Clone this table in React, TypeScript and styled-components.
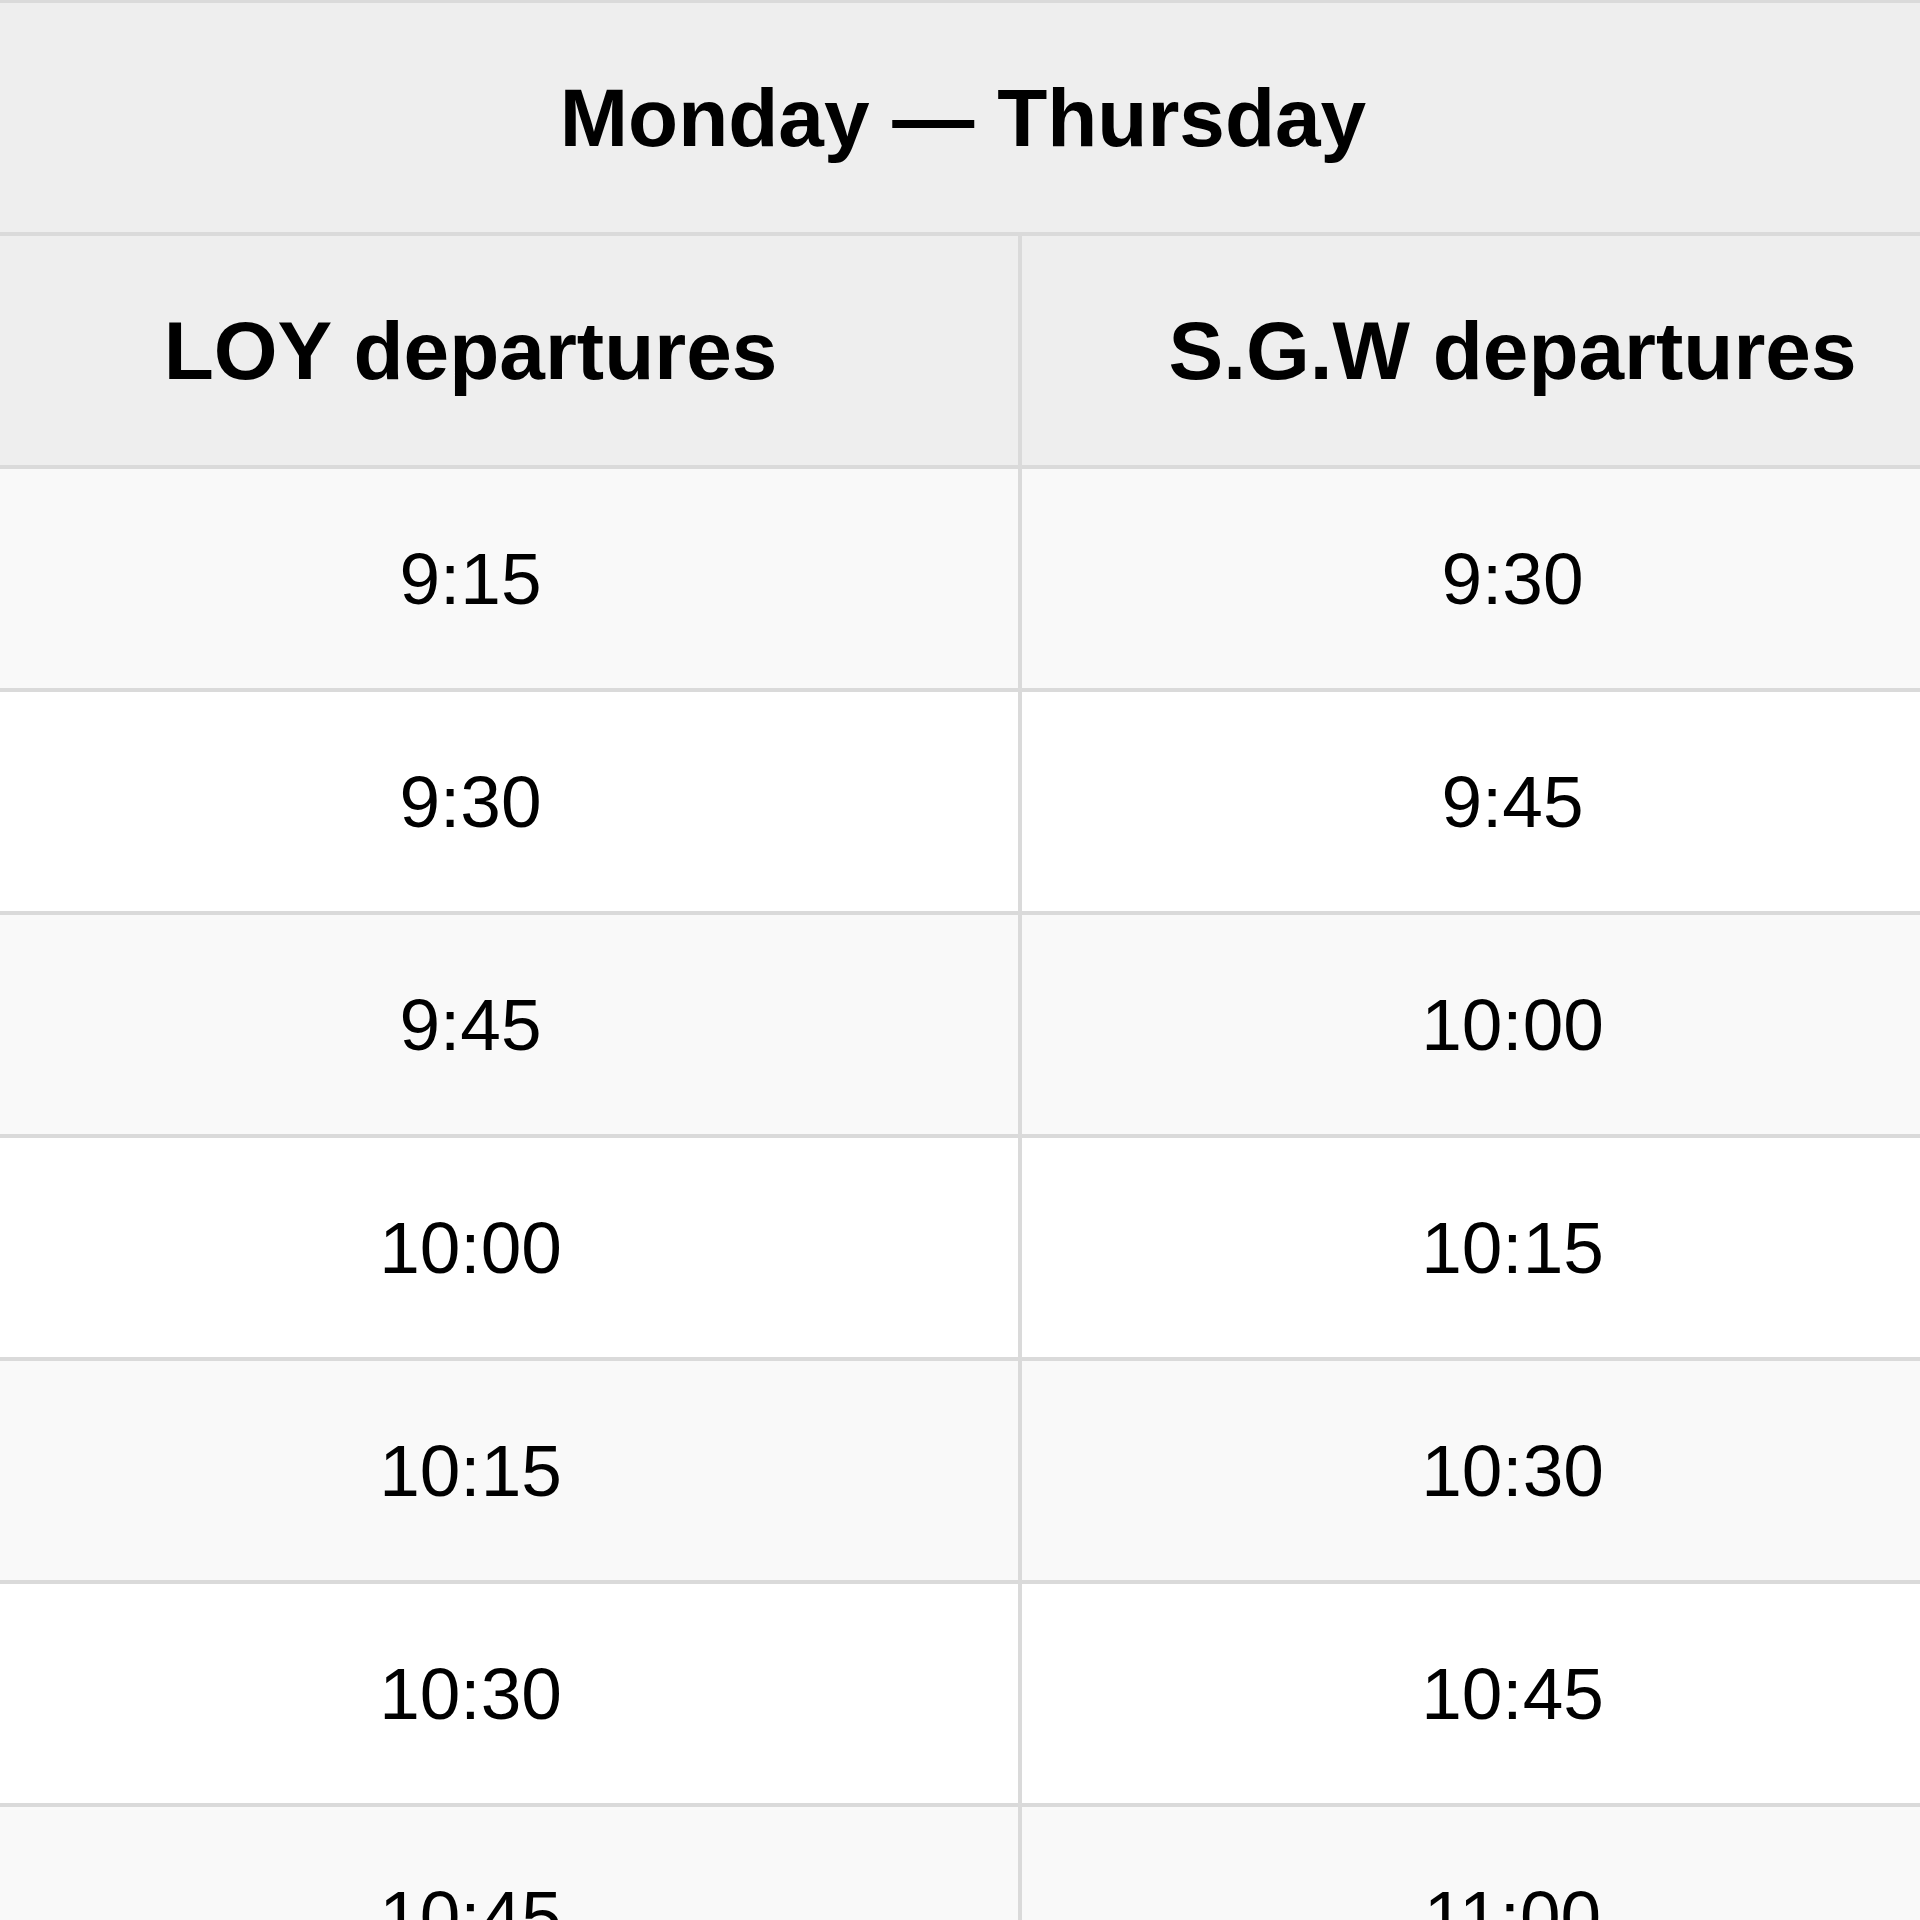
import React from 'react';
import styled, { createGlobalStyle } from 'styled-components';

const BORDER_COLOR = '#dadada';
const HEAD_BG = '#eeeeee';
const ODD_BG = '#f9f9f9';
const EVEN_BG = '#ffffff';

const GlobalStyle = createGlobalStyle`
  html, body {
    margin: 0;
    padding: 0;
    background: #ffffff;
  }
  body {
    font-family: "Liberation Sans", Arial, Helvetica, sans-serif;
    color: #000;
  }
`;

const Page = styled.div`
  width: 1920px;
  height: 1920px;
  overflow: hidden;
`;

const Schedule = styled.table`
  width: 2084px;
  margin: -1px 0 0 -81px;
  border-collapse: collapse;
  table-layout: fixed;
`;

const Column = styled.col<{ $width: number }>`
  width: ${props => props.$width}px;
`;

const HeadCell = styled.th`
  background: ${HEAD_BG};
  border: 4px solid ${BORDER_COLOR};
  padding: 67.5px 0;
  font-size: 82px;
  line-height: 94px;
  font-weight: 700;
  text-align: center;
  white-space: nowrap;
`;

const Row = styled.tr<{ $odd: boolean }>`
  background: ${props => (props.$odd ? ODD_BG : EVEN_BG)};
`;

const TimeCell = styled.td`
  border: 4px solid ${BORDER_COLOR};
  padding: 67.5px 0;
  font-size: 73px;
  line-height: 84px;
  text-align: center;
`;

const departures: [string, string][] = [
  ['9:15', '9:30'],
  ['9:30', '9:45'],
  ['9:45', '10:00'],
  ['10:00', '10:15'],
  ['10:15', '10:30'],
  ['10:30', '10:45'],
  ['10:45', '11:00'],
];

const App = () => {
  return (
    <Page>
      <GlobalStyle />
      <Schedule>
        <colgroup>
          <Column $width={1099} />
          <Column $width={985} />
        </colgroup>
        <thead>
          <tr>
            <HeadCell colSpan={2}>Monday — Thursday</HeadCell>
          </tr>
          <tr>
            <HeadCell>LOY departures</HeadCell>
            <HeadCell>S.G.W departures</HeadCell>
          </tr>
        </thead>
        <tbody>
          {departures.map(([loy, sgw], index) => (
            <Row key={`${loy}-${sgw}`} $odd={index % 2 === 0}>
              <TimeCell>{loy}</TimeCell>
              <TimeCell>{sgw}</TimeCell>
            </Row>
          ))}
        </tbody>
      </Schedule>
    </Page>
  );
};

export default App;
